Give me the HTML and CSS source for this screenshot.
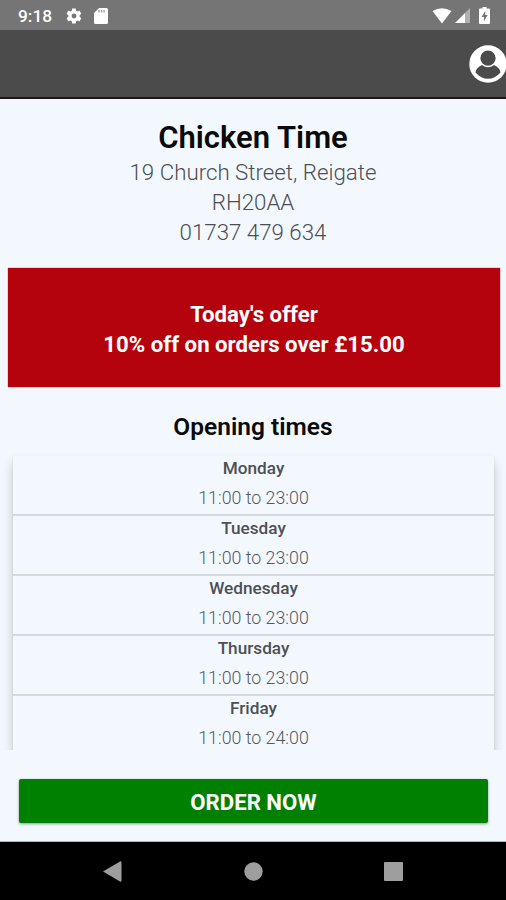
FILE: index.html
```html
<!DOCTYPE html>
<html lang="en">
<head>
<meta charset="utf-8">
<title>Chicken Time</title>
<link rel="stylesheet" href="styles.css">
</head>
<body>
<div class="status">
  <span class="clock">9:18</span>
  <svg class="gear" width="18" height="18" viewBox="0 0 24 24"><path fill="#fff" d="M19.4 13c0-.3.1-.6.1-1s0-.7-.1-1l2.100-1.600c.2-.2.3-.4.1-.7l-2-3.400c-.1-.2-.4-.3-.6-.2l-2.500 1c-.5-.4-1.100-.7-1.700-1l-.4-2.600c0-.2-.2-.4-.5-.4h-4c-.2 0-.5.200-.5.400l-.4 2.600c-.6.3-1.200.6-1.700 1l-2.500-1c-.2-.1-.5 0-.6.2l-2 3.400c-.1.3 0 .5.100.7L4.500 11c0 .3-.1.600-.1 1s0 .7.100 1l-2.200 1.600c-.1.200-.2.400-.1.700l2 3.400c.1.200.4.300.6.200l2.500-1c.5.400 1.100.7 1.700 1l.4 2.600c0 .2.300.4.500.4h4c.3 0 .5-.2.500-.4l.4-2.600c.6-.3 1.200-.6 1.700-1l2.500 1c.2.100.5 0 .6-.2l2-3.400c.2-.3.100-.5-.1-.7L19.400 13zM12 15.200a3.200 3.200 0 1 1 0-6.400 3.200 3.200 0 0 1 0 6.400z"/></svg>
  <svg class="card" width="14" height="16" viewBox="0 0 14 16"><path fill="#fff" d="M5 0h7.500Q14 0 14 1.500v13q0 1.500-1.500 1.500h-11Q0 16 0 14.500V5z"/><path d="M5 2v2.500M7.500 2v2.500M10 2v2.500" stroke="#999" stroke-width="1.300"/></svg>
  <svg class="wifi" width="20" height="16" viewBox="0 0 20 16"><path fill="#fff" d="M.5 3Q10-2.500 19.500 3L10 15.500z"/></svg>
  <svg class="signal" width="15" height="15" viewBox="0 0 15 15"><path fill="#fff" d="M0 15 10 5v10z"/><path fill="#b0b0b0" d="m10 5 5-5v15h-5z"/></svg>
  <svg class="battery" width="11" height="17" viewBox="0 0 11 17"><path fill="#fff" d="M3.500 0h4v1.500H10q1 0 1 1V16q0 1-1 1H1q-1 0-1-1V2.500q0-1 1-1h2.500z"/><path fill="#757575" d="M6.300 4 2.500 10h2.400v4.300L8.700 8H6.300z"/></svg>
</div>
<header class="appbar">
  <svg width="37" height="38" viewBox="0 0 37 38"><circle cx="19" cy="19" r="18.700" fill="#fff"/><circle cx="19" cy="13.200" r="7.600" fill="#4b4b4b"/><path fill="#4b4b4b" d="M6.500 27.500q.5-5 6.500-7.500 6 4.500 12 0 6 2.500 6.500 7.500Q26 33.800 19 33.800T6.500 27.500z"/></svg>
</header>
<main>
  <h1>Chicken Time</h1>
  <p class="address">19 Church Street, Reigate<br>RH20AA<br>01737 479 634</p>
  <section class="offer">Today's offer<br><span class="deal">10% off on orders over £15.00</span></section>
  <h2>Opening times</h2>
  <div class="scroll">
    <div class="times">
      <div class="day"><b>Monday</b><span>11:00 to 23:00</span></div>
      <div class="day"><b>Tuesday</b><span>11:00 to 23:00</span></div>
      <div class="day"><b>Wednesday</b><span>11:00 to 23:00</span></div>
      <div class="day"><b>Thursday</b><span>11:00 to 23:00</span></div>
      <div class="day"><b>Friday</b><span>11:00 to 24:00</span></div>
    </div>
  </div>
  <button class="order">ORDER NOW</button>
</main>
<nav>
  <svg width="19" height="21" viewBox="0 0 19 21"><path fill="#9e9e9e" d="M0 10.500 17 .4q1.500-.6 1.500 1v18.200q0 1.600-1.500 1z"/></svg>
  <svg width="19" height="19" viewBox="0 0 19 19"><circle cx="9.500" cy="9.500" r="9.200" fill="#9e9e9e"/></svg>
  <svg width="19" height="19" viewBox="0 0 19 19"><rect width="19" height="19" rx="1" fill="#9e9e9e"/></svg>
</nav>
</body>
</html>
```
FILE: styles.css
```css
* { box-sizing: border-box; }
body { margin: 0; width: 506px; height: 900px; overflow: hidden; display: flex; flex-direction: column; background: #f3f8ff; font-family: Roboto, sans-serif; color: #0a0a0a; text-align: center; }
svg { display: block; flex: none; }
.status { height: 30px; background: #757575; display: flex; align-items: center; padding: 1px 16px 0 18px; color: #fff; }
.clock { font-size: 17.3px; font-weight: 500; width: 47px; text-align: left; }
.card { margin-left: 11px; }
.wifi { margin-left: auto; }
.signal { margin-left: 3px; }
.battery { margin-left: 9px; }
.appbar { height: 69px; background: #4b4b4b; border-bottom: 2px solid #211317; display: flex; align-items: center; justify-content: flex-end; }
main { height: 743px; display: flex; flex-direction: column; border-bottom: 1px solid #b5b8bc; }
h1 { margin: 19px 0 -1px; font-size: 31px; line-height: 40px; font-weight: 600; }
.address { margin: 0; font-size: 22.3px; line-height: 30px; font-weight: 300; color: #4c4f52; }
.offer { margin: 21px 6px 0 8px; height: 119px; padding-top: 31px; background: #b5030d; box-shadow: 0 0 1px #b5030d; color: #fff; font-size: 22.2px; line-height: 30px; font-weight: 700; }
h2 { margin: 22px 0 0; font-size: 24.5px; line-height: 36px; font-weight: 600; }
.scroll { margin-top: 5px; padding: 6px 12px 0 13px; height: 300px; overflow: hidden; }
.times { height: 420px; border-radius: 2px; box-shadow: 0 7px 12px rgba(0,0,0,.2), 0 1px 2px rgba(0,0,0,.14); background: #f3f8ff; }
.day { height: 60px; display: flex; flex-direction: column; border-bottom: 2px solid #d5d9dd; font-size: 17px; line-height: 30px; }
.day:last-child { border: 0; }
.day b { height: 27px; line-height: 25px; font-weight: 500; color: #4d5053; font-size: 17.2px; }
.day span { font-weight: 300; font-size: 17.8px; color: #55585b; }
.order { margin: 29px 18px 0 19px; height: 44px; padding: 2px 0 0; border: 0; border-radius: 2px; background: #008000; box-shadow: 0 1px 3px rgba(0,0,0,.4); color: #fff; font: 700 22.2px/30px Roboto, sans-serif; }
nav { height: 58px; background: #000; display: flex; align-items: center; justify-content: space-between; padding: 0 103px; }
```
